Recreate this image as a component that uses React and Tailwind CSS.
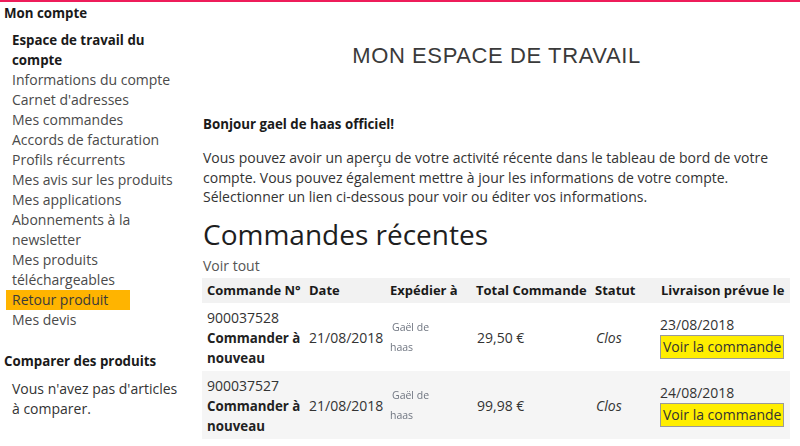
import React from "react";

const navItems = [
  "Informations du compte",
  "Carnet d'adresses",
  "Mes commandes",
  "Accords de facturation",
  "Profils récurrents",
  "Mes avis sur les produits",
  "Mes applications",
  "Abonnements à la newsletter",
  "Mes produits téléchargeables",
];

function Blurred() {
  return (
    <div className="text-[10.5px] leading-[20px] text-[#6f7580] blur-[0.7px]">
      <div className="pl-[2px]">Gaël de</div>
      <div>haas</div>
    </div>
  );
}

function Row({ num, date, total, delivery, bg }) {
  return (
    <tr className={bg}>
      <td className="pl-[5px] pr-[2px] pt-[5px] pb-[3px] align-middle">
        <div className="leading-[20px] text-[#333]">{num}</div>
        <div className="font-bold text-[13.3px] leading-[20px] text-[#222] whitespace-nowrap">Commander à</div>
        <div className="font-bold text-[13.3px] leading-[20px] text-[#222]">nouveau</div>
      </td>
      <td className="pl-[4px] align-middle text-[#333]">{date}</td>
      <td className="pl-[4px] align-middle">
        <Blurred />
      </td>
      <td className="pl-[5px] align-middle text-[#333]">{total}</td>
      <td className="pl-[5px] align-middle italic text-[#333]">Clos</td>
      <td className="pl-[3px] align-middle">
        <div className="leading-[20px] text-[#333]">{delivery}</div>
        <div className="inline-block bg-[#ffee00] border border-[#9a9a9a] px-[2px] leading-[22px] text-[#333] whitespace-nowrap">
          Voir la commande
        </div>
      </td>
    </tr>
  );
}

export default function App() {
  return (
    <div
      className="w-[800px] h-[446px] bg-white border-t-2 border-[#ee1c5a] overflow-hidden flex text-[14px]"
      style={{ fontFamily: '"Open Sans", "Noto Sans", sans-serif' }}
    >
      <aside className="w-[203px] shrink-0 pt-[1px]">
        <div className="pl-[4px] font-bold text-[13.3px] leading-[20px] text-[#1a1a1a]">Mon compte</div>
        <ul className="mt-[7px] pl-[12px] w-[182px] leading-[20px] text-[#4a4a4a]">
          <li className="font-bold text-[13.3px] text-[#1a1a1a] w-[150px]">Espace de travail du compte</li>
          {navItems.map((t) => (
            <li key={t} className={t.startsWith("Abonnements") ? "w-[140px]" : t.startsWith("Mes produits") ? "w-[120px]" : ""}>
              {t}
            </li>
          ))}
          <li className="ml-[-6px] pl-[6px] w-[124px] bg-[#ffb400] text-[#3a3a3a]">Retour produit</li>
          <li>Mes devis</li>
        </ul>
        <div className="mt-[21px] pl-[4px] font-bold text-[13.3px] leading-[20px] text-[#1a1a1a]">Comparer des produits</div>
        <div className="mt-[8px] pl-[12px] w-[185px] leading-[20px] text-[#333]">
          Vous n'avez pas d'articles à comparer.
        </div>
      </aside>
      <main className="w-[587px] shrink-0">
        <h1
          className="mt-[40px] text-center text-[22px] leading-[28px] text-[#3a3a3a] tracking-[0.6px]"
          style={{ fontFamily: '"Liberation Sans", Arial, sans-serif' }}
        >
          MON ESPACE DE TRAVAIL
        </h1>
        <p className="mt-[44px] font-bold text-[13.3px] leading-[20px] text-[#1a1a1a]">Bonjour gael de haas officiel!</p>
        <p className="mt-[14px] leading-[19.7px] text-[#333]">
          Vous pouvez avoir un aperçu de votre activité récente dans le tableau de bord de votre compte. Vous pouvez également mettre à jour les informations de votre compte. Sélectionner un lien ci-dessous pour voir ou éditer vos informations.
        </p>
        <h2 className="mt-[10px] text-[28px] leading-[34px] text-[#1e1e1e]">Commandes récentes</h2>
        <div className="mt-[5px] leading-[20px] text-[#555]">Voir tout</div>
        <table className="mt-[2px] ml-[-1px] w-[588px] table-fixed border-collapse">
          <colgroup>
            <col className="w-[103px]" />
            <col className="w-[81px]" />
            <col className="w-[86px]" />
            <col className="w-[119px]" />
            <col className="w-[66px]" />
            <col className="w-[133px]" />
          </colgroup>
          <thead>
            <tr className="bg-[#f2f2f2] h-[25px] text-left text-[#1a1a1a] text-[13px]">
              <th className="pl-[5px] font-bold whitespace-nowrap">Commande N°</th>
              <th className="pl-[4px] font-bold">Date</th>
              <th className="pl-[4px] font-bold whitespace-nowrap">Expédier à</th>
              <th className="pl-[4px] font-bold whitespace-nowrap">Total Commande</th>
              <th className="pl-[4px] font-bold">Statut</th>
              <th className="pl-[4px] font-bold whitespace-nowrap">Livraison prévue le</th>
            </tr>
          </thead>
          <tbody>
            <Row num="900037528" date="21/08/2018" total="29,50 €" delivery="23/08/2018" bg="bg-white h-[68px]" />
            <Row num="900037527" date="21/08/2018" total="99,98 €" delivery="24/08/2018" bg="bg-[#f5f5f5] h-[67px]" />
          </tbody>
        </table>
      </main>
    </div>
  );
}
